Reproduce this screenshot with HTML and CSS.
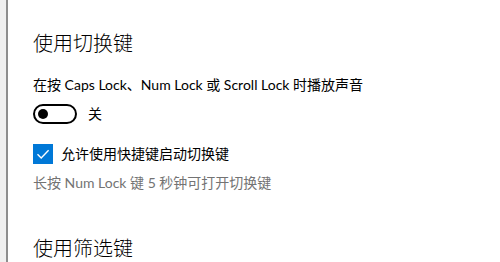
FILE: index.html
```html
<!DOCTYPE html>
<html lang="zh-CN">
<head>
<meta charset="utf-8">
<link rel="stylesheet" href="styles.css">
</head>
<body>
<div class="page">
  <div class="rail"></div>
  <main class="content">
    <h2 class="heading">使用切换键</h2>
    <p class="label">在按 Caps Lock、Num Lock 或 Scroll Lock 时播放声音</p>
    <div class="toggle-row">
      <span class="toggle"><span class="knob"></span></span>
      <span class="toggle-text">关</span>
    </div>
    <label class="check-row">
      <span class="checkbox">
        <svg width="20" height="20" viewBox="0 0 20 20"><path d="M4.5 10.2 L8.2 13.9 L15.6 6.3" fill="none" stroke="#fff" stroke-width="1.4"/></svg>
      </span>
      <span class="check-text">允许使用快捷键启动切换键</span>
    </label>
    <p class="hint">长按 Num Lock 键 5 秒钟可打开切换键</p>
    <h2 class="heading heading2">使用筛选键</h2>
  </main>
</div>
</body>
</html>
```
FILE: styles.css
```css
html, body {
  margin: 0;
  padding: 0;
  background: #fff;
  height: 100%;
  overflow: hidden;
}
body {
  font-family: "Lato", "Noto Sans CJK SC", sans-serif;
  color: #000;
}
.page {
  display: flex;
  height: 262px;
}
.rail {
  width: 6px;
  background: #f0f0f0;
  border-right: 2px solid #8e8e8e;
  flex: none;
}
.content {
  padding: 29px 0 0 25px;
  display: flex;
  flex-direction: column;
  align-items: flex-start;
}
.heading {
  margin: 0;
  font-size: 20px;
  line-height: 28px;
  font-weight: 300;
}
.label {
  margin: 18px 0 0;
  font-size: 14px;
  line-height: 20px;
}
.toggle-row {
  margin-top: 9px;
  display: flex;
  align-items: center;
  height: 20px;
}
.toggle {
  box-sizing: border-box;
  width: 44px;
  height: 20px;
  border: 2px solid #000;
  border-radius: 10px;
  display: flex;
  align-items: center;
  padding-left: 3px;
}
.knob {
  width: 10px;
  height: 10px;
  border-radius: 50%;
  background: #000;
}
.toggle-text {
  margin-left: 11px;
  font-size: 14px;
  line-height: 20px;
}
.check-row {
  margin-top: 20px;
  display: flex;
  align-items: center;
  height: 20px;
}
.checkbox {
  width: 20px;
  height: 20px;
  background: #0078d7;
  display: block;
}
.checkbox svg {
  display: block;
}
.check-text {
  margin-left: 8px;
  font-size: 14px;
  line-height: 20px;
}
.hint {
  margin: 9px 0 0;
  font-size: 14px;
  line-height: 20px;
  color: #737373;
}
.heading2 {
  margin-top: 41px;
}
```
